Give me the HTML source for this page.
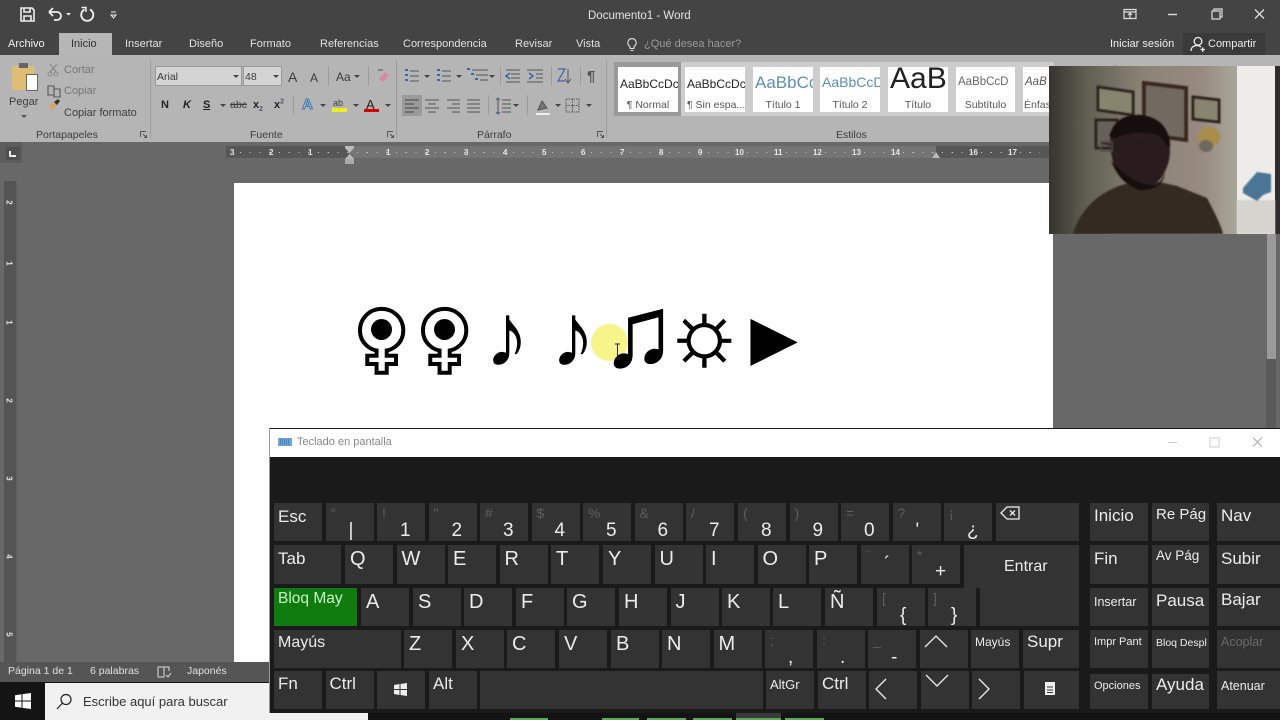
<!DOCTYPE html>
<html lang="es"><head><meta charset="utf-8"><title>Documento1 - Word</title>
<style>
html,body{margin:0;padding:0;width:1280px;height:720px;overflow:hidden;background:#686868}
body{position:relative;font-family:"Liberation Sans","Noto Sans CJK JP",sans-serif}
div,span,svg{position:absolute}
.t{white-space:nowrap;line-height:1}
.tab{top:38px;font-size:11px;color:#e2e2e2;white-space:nowrap;line-height:13px}
.r{font-size:10.5px;color:#3c3c3c;white-space:nowrap;line-height:12px}
.g{color:#777}
.b{font-size:11px;font-weight:bold;color:#222;white-space:nowrap;line-height:12px}
.sty{top:67px;width:60px;height:45px;background:#fff;overflow:hidden}
.sty i{position:absolute;left:2px;top:9px;font-style:normal;font-size:11.5px;color:#222;white-space:nowrap}
.sty b{position:absolute;left:0;right:0;top:32px;font-weight:normal;font-size:10.5px;color:#555;text-align:center;white-space:nowrap}
.sep{width:1px;background:#9c9c9c}
.rn{top:148px;font-size:8px;color:#e6e6e6;line-height:9px;font-weight:bold}
.k{background:#333;color:#ececec;width:48px;height:38px;font-size:17px;line-height:20px;overflow:visible;white-space:nowrap}
.k u{position:absolute;left:4px;top:4px;text-decoration:none}
.k b{position:absolute;left:5px;top:4px;font-weight:normal;font-size:20px}
.k s{position:absolute;left:5px;top:0;text-decoration:none;font-size:14px;color:#5e5e5e}
.k em{position:absolute;left:23px;top:18px;font-style:normal;font-size:19px;line-height:20px}
.r1{top:503px}.r2{top:545px;height:39px}.r3{top:588px}.r4{top:630px}.r5{top:671px}
.sm u{font-size:12px;top:2px}
.fem{font-family:"DejaVu Sans",sans-serif;line-height:1;white-space:nowrap;font-size:70px;color:#fff;-webkit-text-stroke:8px #000;paint-order:stroke fill}
.sym{font-family:"Liberation Sans","DejaVu Sans",sans-serif;color:#000;line-height:1;white-space:nowrap;font-size:90px}
.green{top:718px;height:2px;background:#5fa860}
.dd{border:3px solid transparent;border-top:3px solid #444}
</style></head><body>

<!-- title bar and tabs -->
<div style="left:0;top:0;width:1280px;height:55px;background:#444"></div>
<svg style="left:0;top:0" width="130" height="30" fill="none" stroke="#eee" stroke-width="1.6">
<path d="M21 8h11l2 2v11H21z"/><path d="M24 8v4h6V8M24 21v-5h7v5"/>
<path d="M49 12h8a4 4 0 0 1 0 8h-3M49 12l4-4M49 12l4 4" stroke-width="1.8"/>
<path d="M66 13h5l-2.500 2.500z" fill="#eee" stroke="none"/>
<path d="M84.500 9.500a6 6 0 1 0 5.500 0" stroke-width="1.900"/><path d="M81.500 7.500h4.500v4.500" stroke-width="1.500"/>
<path d="M111 12h5M111 15h5l-2.500 3z" stroke-width="1"/>
</svg>
<div class="t" style="left:588px;top:11px;font-size:11.500px;color:#e4e4e4">Documento1 - Word</div>
<svg style="left:1115px;top:0" width="165" height="30" fill="none" stroke="#ddd" stroke-width="1.200">
<path d="M9 9.500h12v9H9zM9 12h12M15 18v-5M13 15l2-2 2 2"/>
<path d="M53 14.500h9" stroke-width="1.400"/>
<path d="M97 11h8v8h-8zM99 11V9h8v8h-2"/>
<path d="M140 9.500l9 9M149 9.500l-9 9" stroke-width="1.300"/>
</svg>
<div style="left:59px;top:33px;width:53px;height:22px;background:#b6b6b6"></div>
<div class="tab" style="left:8px;color:#f0f0f0">Archivo</div>
<div class="tab" style="left:71px;color:#333">Inicio</div>
<div class="tab" style="left:125px">Insertar</div>
<div class="tab" style="left:189px">Diseño</div>
<div class="tab" style="left:250px">Formato</div>
<div class="tab" style="left:320px">Referencias</div>
<div class="tab" style="left:403px">Correspondencia</div>
<div class="tab" style="left:515px">Revisar</div>
<div class="tab" style="left:576px">Vista</div>
<svg style="left:625px;top:36px" width="15" height="16" fill="none" stroke="#ddd" stroke-width="1.100"><path d="M5 10.500a4.200 4.200 0 1 1 4 0v2H5zM5.500 14.500h3"/></svg>
<div class="tab" style="left:644px;color:#9c9c9c">¿Qué desea hacer?</div>
<div class="tab" style="left:1110px;color:#eee">Iniciar sesión</div>
<div style="left:1183px;top:33px;width:82px;height:22px;background:#3a3a3a"></div>
<svg style="left:1189px;top:35px" width="17" height="18" fill="none" stroke="#eee" stroke-width="1.300"><path d="M9 2.500a3.800 3.800 0 1 0 .01 0M2 16c0-3.500 2.500-5.500 6-5.500 2 0 3 .5 4 1.500M11.500 14.500h4.500M13.700 12.500v4.500"/></svg>
<div class="tab" style="left:1208px;color:#eee">Compartir</div>

<!-- ribbon -->
<div style="left:0;top:55px;width:1280px;height:87px;background:#b5b5b5"></div>
<div class="sep" style="left:150px;top:60px;height:78px"></div>
<div class="sep" style="left:396px;top:60px;height:78px"></div>
<div class="sep" style="left:606px;top:60px;height:78px"></div>
<!-- clipboard -->
<div style="left:12px;top:66px;width:22px;height:24px;background:#e0bd74"></div>
<div style="left:19px;top:63px;width:9px;height:5px;background:#666"></div>
<div style="left:26px;top:74px;width:12px;height:17px;background:#fff;border:1px solid #666;box-sizing:border-box"></div>
<div class="r" style="left:9px;top:96px;font-size:11px">Pegar</div>
<div class="dd" style="left:21px;top:115px;border-top-color:#555"></div>
<svg style="left:46px;top:62px" width="16" height="60" fill="none" stroke="#888" stroke-width="1.100"><circle cx="4" cy="12" r="2"/><circle cx="10" cy="12" r="2"/><path d="M4 10l7-8M10 10L4 2"/><path d="M2 24h6v9H2zM8 27h6v8H8z" stroke="#555"/><path d="M3 44l5-4 3 3-5 5z" fill="#d9a860" stroke="none"/><path d="M8 40l4-3 2 2-3 4z" fill="#333" stroke="none"/></svg>
<div class="r g" style="left:64px;top:64px;font-size:11px">Cortar</div>
<div class="r g" style="left:64px;top:85px;font-size:11px">Copiar</div>
<div class="r" style="left:64px;top:107px;font-size:11px">Copiar formato</div>
<div class="r" style="left:36px;top:129px">Portapapeles</div>
<svg style="left:139px;top:130px" width="9" height="9" fill="none" stroke="#555"><path d="M1.500 7V1.500H7M4 4l3.500 3.500M7.500 5v2.500H5"/></svg>
<!-- font -->
<div style="left:155px;top:66px;width:87px;height:20px;background:#d4d4d4;border:1px solid #999;box-sizing:border-box"></div>
<div style="left:243px;top:66px;width:39px;height:20px;background:#d4d4d4;border:1px solid #999;box-sizing:border-box"></div>
<div class="r" style="left:157px;top:71px">Arial</div>
<div class="r" style="left:245px;top:71px">48</div>
<div class="dd" style="left:233px;top:75px"></div>
<div class="dd" style="left:273px;top:75px"></div>
<div class="r" style="left:288px;top:70px;font-size:14px;line-height:15px">A</div>
<div class="r" style="left:310px;top:72px;font-size:12px;line-height:13px">A</div>
<div class="sep" style="left:328px;top:66px;height:20px"></div>
<div class="r" style="left:336px;top:70px;font-size:12px;line-height:14px">Aa</div>
<div class="dd" style="left:354px;top:75px"></div>
<div class="sep" style="left:368px;top:66px;height:20px"></div>
<svg style="left:375px;top:68px" width="16" height="16"><path d="M4 11l6-7 4 3-6 7z" fill="#d98a9a"/><path d="M3 2h5" stroke="#555"/></svg>
<div class="b" style="left:161px;top:99px">N</div>
<div class="b" style="left:183px;top:99px;font-style:italic">K</div>
<div class="b" style="left:203px;top:99px;text-decoration:underline">S</div>
<div class="dd" style="left:220px;top:104px"></div>
<div class="r" style="left:230px;top:99px;text-decoration:line-through">abc</div>
<div class="b" style="left:253px;top:99px">x<sub style="font-size:7px;color:#557">2</sub></div>
<div class="b" style="left:274px;top:99px">x<sup style="font-size:7px;color:#557;line-height:0">2</sup></div>
<div class="sep" style="left:293px;top:95px;height:20px"></div>
<div class="b" style="left:302px;top:97px;font-size:15px;line-height:16px;color:#9cc0e0;-webkit-text-stroke:1px #4a78a8">A</div>
<div class="dd" style="left:320px;top:104px"></div>
<div class="r" style="left:333px;top:97px;font-size:9px">ab</div>
<div style="left:332px;top:108px;width:15px;height:4px;background:#eded20"></div>
<div class="dd" style="left:353px;top:104px"></div>
<div class="b" style="left:366px;top:98px;font-size:13px;line-height:13px;font-weight:normal">A</div>
<div style="left:364px;top:109px;width:15px;height:3px;background:#e00000"></div>
<div class="dd" style="left:385px;top:104px"></div>
<div class="r" style="left:250px;top:129px">Fuente</div>
<svg style="left:386px;top:130px" width="9" height="9" fill="none" stroke="#555"><path d="M1.500 7V1.500H7M4 4l3.500 3.500M7.500 5v2.500H5"/></svg>
<!-- paragraph -->
<div style="left:402px;top:95px;width:20px;height:21px;background:#9a9a9a"></div>
<svg style="left:400px;top:64px" width="205" height="52" fill="none" stroke="#555">
<path d="M10 7h9M10 12h9M10 17h9M42 7h9M42 12h9M42 17h9M72 6h16M76 11h12M80 16h8M106 6h14M111 10h9M111 14h9M106 18h14M127 6h16M136 10h7M136 14h7M127 18h16"/>
<path d="M5 6h3M5 11h3M5 16h3M37 6h3M37 11h3M37 16h3M67 5h3M71 10h3M75 15h3" stroke="#3468a8" stroke-width="2"/>
<path d="M110 9l-4 3 4 3M129 9l4 3-4 3" stroke="#3468a8" stroke-width="1.500"/>
<path d="M158 5h7l-7 12h7" stroke="#3468a8" stroke-width="1.200"/><path d="M168 5v14M165 15l3 4 3-4"/>
<path d="M5 36h14M5 40h9M5 44h14M5 48h9" stroke="#444"/>
<path d="M25 36h14M28 40h8M25 44h14M28 48h8M47 36h13M52 40h8M47 44h13M52 48h8M67 36h13M67 40h13M67 44h13M67 48h13M102 36h9M102 40h9M102 44h9M102 48h9M98 34v16"/>
<path d="M96 36l2-2 2 2M96 48l2 2 2-2" stroke="#3468a8"/>
<path d="M138 46l4-9 5 7z" fill="#777"/><path d="M136 50h14" stroke="#eee" stroke-width="2"/>
<path d="M166 35h13v13h-13zM172.500 35v13M166 41.500h13" stroke-dasharray="1.500 1"/>
</svg>
<div class="dd" style="left:424px;top:75px"></div>
<div class="dd" style="left:456px;top:75px"></div>
<div class="dd" style="left:489px;top:75px"></div>
<div class="dd" style="left:513px;top:104px"></div>
<div class="dd" style="left:555px;top:104px"></div>
<div class="dd" style="left:586px;top:104px"></div>
<div class="sep" style="left:500px;top:66px;height:20px"></div>
<div class="sep" style="left:551px;top:66px;height:20px"></div>
<div class="sep" style="left:580px;top:66px;height:20px"></div>
<div class="sep" style="left:488px;top:95px;height:20px"></div>
<div class="sep" style="left:527px;top:95px;height:20px"></div>
<div class="r" style="left:587px;top:69px;font-size:15px;line-height:16px;font-weight:bold;color:#555">¶</div>
<div class="r" style="left:477px;top:129px">Párrafo</div>
<svg style="left:596px;top:130px" width="9" height="9" fill="none" stroke="#555"><path d="M1.500 7V1.500H7M4 4l3.500 3.500M7.500 5v2.500H5"/></svg>
<!-- styles -->
<div style="left:614px;top:62px;width:440px;height:54px;background:#cdcdcd"></div>
<div style="left:614px;top:62px;width:67px;height:54px;background:#9a9a9a"></div>
<div class="sty" style="left:618px"><i style="top:10px;font-size:12px">AaBbCcDc</i><b>¶ Normal</b></div>
<div class="sty" style="left:685px"><i style="top:10px;font-size:12px">AaBbCcDc</i><b style="text-align:left;left:2px">¶ Sin espa...</b></div>
<div class="sty" style="left:753px"><i style="font-size:17px;top:6px;color:#5b8fb8">AaBbCc</i><b>Título 1</b></div>
<div class="sty" style="left:820px"><i style="font-size:14px;top:7px;color:#5b8fb8">AaBbCcD</i><b>Título 2</b></div>
<div class="sty" style="left:888px"><i style="font-size:30px;top:-5px;color:#222">AaB</i><b>Título</b></div>
<div class="sty" style="left:956px;width:59px"><i style="color:#666">AaBbCcD</i><b>Subtítulo</b></div>
<div class="sty" style="left:1023px;width:27px"><i style="font-style:italic;color:#555;left:2px">AaB</i><b style="text-align:left;left:1px">Énfasis</b></div>
<div class="r" style="left:836px;top:129px">Estilos</div>
<div style="left:1115px;top:64px;width:1px;height:50px;background:#9c9c9c"></div>

<!-- document area -->
<div style="left:0;top:142px;width:1280px;height:540px;background:#686868"></div>
<div style="left:0;top:142px;width:22px;height:21px;background:#5c5c5c"></div>
<div style="left:6px;top:147px;width:14px;height:13px;background:#4f4f4f"></div>
<svg style="left:9px;top:150px" width="8" height="8"><path d="M1 1v5h6" fill="none" stroke="#eee" stroke-width="2"/></svg>
<div style="left:226px;top:146px;width:123px;height:12px;background:#575757"></div>
<div style="left:349px;top:146px;width:587px;height:12px;background:#757575"></div>
<div style="left:936px;top:146px;width:114px;height:12px;background:#575757"></div>
<div style="left:240px;top:152px;width:800px;height:1px;background:repeating-linear-gradient(90deg,#c4c4c4 0 1px,transparent 1px 9.750px)"></div>
<span class="rn" style="left:230px">3</span><span class="rn" style="left:269px">2</span><span class="rn" style="left:308px">1</span>
<span class="rn" style="left:386px">1</span><span class="rn" style="left:425px">2</span><span class="rn" style="left:464px">3</span><span class="rn" style="left:503px">4</span><span class="rn" style="left:542px">5</span><span class="rn" style="left:581px">6</span><span class="rn" style="left:620px">7</span><span class="rn" style="left:659px">8</span><span class="rn" style="left:698px">9</span><span class="rn" style="left:735px">10</span><span class="rn" style="left:774px">11</span><span class="rn" style="left:813px">12</span><span class="rn" style="left:852px">13</span><span class="rn" style="left:891px">14</span><span class="rn" style="left:969px">16</span><span class="rn" style="left:1008px">17</span>
<svg style="left:343px;top:145px" width="13" height="20"><path d="M2 1h9v2L6.500 8 2 3zM2 14l4.500-5 4.500 5z" fill="#bbb"/><rect x="2" y="14" width="9" height="5" fill="#aaa"/></svg>
<svg style="left:931px;top:150px" width="10" height="9"><path d="M1 8l4-6 4 6z" fill="#bbb"/></svg>
<div style="left:4px;top:181px;width:12px;height:481px;background:#545454"></div>
<div style="left:16px;top:181px;width:1px;height:481px;background:#5f5f5f"></div>
<div class="rn" style="left:7px;top:198px;transform:rotate(90deg)">2</div>
<div class="rn" style="left:7px;top:259px;transform:rotate(90deg)">1</div>
<div class="rn" style="left:7px;top:318px;transform:rotate(90deg)">1</div>
<div class="rn" style="left:7px;top:396px;transform:rotate(90deg)">2</div>
<div class="rn" style="left:7px;top:474px;transform:rotate(90deg)">3</div>
<div class="rn" style="left:7px;top:552px;transform:rotate(90deg)">4</div>
<div class="rn" style="left:7px;top:630px;transform:rotate(90deg)">5</div>
<div style="left:234px;top:183px;width:819px;height:500px;background:#fff"></div>
<div style="left:1267px;top:234px;width:9px;height:125px;background:#9a9a9a"></div>
<div style="left:1266px;top:359px;width:10px;height:70px;background:#5a5a5a"></div>

<!-- symbols -->
<div style="left:591px;top:324px;width:37px;height:37px;border-radius:50%;background:#f7f58a"></div>
<div class="fem" style="left:356px;top:303px">♀</div>
<div class="fem" style="left:419px;top:303px">♀</div>
<div style="left:364px;top:312px;width:35px;height:35px;border-radius:50%;background:#fff"></div>
<div style="left:427px;top:312px;width:35px;height:35px;border-radius:50%;background:#fff"></div>
<div style="left:371px;top:319px;width:21px;height:21px;border-radius:50%;background:#000"></div>
<div style="left:434px;top:319px;width:21px;height:21px;border-radius:50%;background:#000"></div>
<div class="sym" style="left:484.500px;top:291px">♪</div>
<div class="sym" style="left:550.500px;top:291px">♪</div>
<div class="sym" style="left:601px;top:282px;font-size:100px;-webkit-text-stroke:1px #000">♫</div>
<div class="sym" style="left:664px;top:287px;font-size:88px;-webkit-text-stroke:1.500px #000">☼</div>
<div class="sym" style="left:735px;top:298px;font-size:79px">►</div>
<svg style="left:612px;top:343px" width="12" height="18" fill="none" stroke="#222" stroke-width="1"><path d="M3 1h5M3 16h5M5.500 1v15"/></svg>

<!-- webcam -->
<svg style="left:1049px;top:66px" width="231" height="168" viewBox="0 0 231 168">
<defs>
<linearGradient id="w" x1="0" x2="1" y1="0" y2="0"><stop offset="0" stop-color="#35352e"/><stop offset=".2" stop-color="#5f5f52"/><stop offset=".5" stop-color="#8a8476"/><stop offset=".8" stop-color="#97897f"/><stop offset="1" stop-color="#a8a69a"/></linearGradient>
<filter id="bl"><feGaussianBlur stdDeviation=".8"/></filter>
</defs>
<rect width="188" height="168" fill="url(#w)"/>
<rect x="188" width="38" height="168" fill="#eeece8"/>
<rect x="226" width="5" height="168" fill="#2e2e2e"/>
<g filter="url(#bl)">
<rect x="188" y="134" width="38" height="34" fill="#d6d4ce"/>
<path d="M194 122l14-16 14 2v18l-8 3-6 6-14-8z" fill="#4b7596"/>
<path d="M49 21l35 5v23l-35-5z" fill="#87846f" stroke="#2a231c" stroke-width="3"/>
<path d="M95 17l42 5v52l-42-6z" fill="#6f6a60" stroke="#3a281c" stroke-width="4"/>
<path d="M144 31l26 3v22l-26-3z" fill="#87846f" stroke="#2a231c" stroke-width="3"/>
<path d="M47 54h21v28H47z" fill="#66625a" stroke="#2a231c" stroke-width="3"/>
<ellipse cx="160" cy="71" rx="11" ry="10" fill="#a88c48"/>
<ellipse cx="157" cy="80" rx="7" ry="6" fill="#6e675c"/>
<path d="M24 168c6-22 24-42 52-50l34-2 18 4 30 12c6 12 14 26 16 36z" fill="#352a24"/>
<path d="M61 72c0-16 14-24 30-23 18 0 30 16 30 34 0 10-2 16-4 20-4 10-10 18-26 18-14 0-22-10-26-22-3-10-4-18-4-27z" fill="#2a1e1b"/>
<path d="M60 70c4-14 18-22 32-21 18 1 30 14 29 32-6-2-8-10-14-12-14-4-28-2-42 4z" fill="#160e0c"/>
<path d="M62 95c10 10 24 24 44 24 6-2 8-8 10-12-2 14-14 18-26 17-12-4-22-14-28-29z" fill="#160e0c"/>
<path d="M52 77l18 3 32-7" fill="none" stroke="#201b1b" stroke-width="2"/>
<rect x="52" y="76" width="11" height="9" fill="none" stroke="#4f4a44" stroke-width="1.500"/>
</g>
</svg>

<!-- status bar -->
<div style="left:0;top:662px;width:270px;height:20px;background:#555"></div>
<div class="t" style="left:8px;top:666px;font-size:10.500px;color:#e0e0e0">Página 1 de 1</div>
<div class="t" style="left:90px;top:666px;font-size:10.500px;color:#e0e0e0">6 palabras</div>
<svg style="left:157px;top:665px" width="15" height="14" fill="none" stroke="#ddd"><path d="M1 2h6v10H1zM7 2l5 0v4M9 10l2 2 3-4"/></svg>
<div class="t" style="left:187px;top:666px;font-size:10.500px;color:#e0e0e0">Japonés</div>

<!-- taskbar -->
<div style="left:0;top:682px;width:1280px;height:38px;background:#141414"></div>
<svg style="left:15px;top:693px" width="16" height="16" fill="#fff"><path d="M0 2.300l6.500-1v6.200H0zM7.500 1.100L16 0v7.500H7.500zM0 8.500h6.500v6.200l-6.500-1zM7.500 8.500H16V16l-8.500-1.100z"/></svg>
<div style="left:45px;top:683px;width:323px;height:37px;background:#f1f1f1"></div>
<svg style="left:55px;top:692px" width="20" height="20" fill="none" stroke="#222" stroke-width="1.200"><circle cx="11" cy="7.500" r="5"/><path d="M7.500 11L2 17"/></svg>
<div class="t" style="left:83px;top:695px;font-size:13px;color:#333">Escribe aquí para buscar</div>
<div class="green" style="left:510px;width:38px"></div>
<div class="green" style="left:602px;width:37px"></div>
<div class="green" style="left:647px;width:39px"></div>
<div class="green" style="left:693px;width:39px"></div>
<div style="left:736px;top:712px;width:45px;height:6px;background:#3a3a3a"></div>
<div class="green" style="left:736px;width:45px"></div>
<div class="green" style="left:785px;width:39px"></div>

<!-- on-screen keyboard -->
<div style="left:269px;top:428px;width:1011px;height:285px;background:#1a1a1a;border-left:1px solid #999;box-sizing:border-box"></div>
<div style="left:270px;top:429px;width:1010px;height:28px;background:#fff"></div>
<svg style="left:278px;top:438px" width="14" height="8"><rect width="14" height="8" fill="#6ea5d8"/><path d="M2 2h10M2 4h10M2 6h10" stroke="#2a5f9a" stroke-dasharray="1 1"/></svg>
<div class="t" style="left:297px;top:437px;font-size:11px;color:#888">Teclado en pantalla</div>
<svg style="left:1160px;top:433px" width="110" height="18" fill="none" stroke="#ccc"><path d="M8 9.500h9M50 5h9v9h-9z"/><path d="M93 4.500l9 9M102 4.500l-9 9" stroke="#aaa"/></svg>

<div class="k r1" style="left:274px"><u>Esc</u></div>
<div class="k r1" style="left:325.500px"><s>°</s><em>|</em></div>
<div class="k r1" style="left:377px"><s>!</s><em>1</em></div>
<div class="k r1" style="left:428.500px"><s>"</s><em>2</em></div>
<div class="k r1" style="left:480px"><s>#</s><em>3</em></div>
<div class="k r1" style="left:531.500px"><s>$</s><em>4</em></div>
<div class="k r1" style="left:583px"><s>%</s><em>5</em></div>
<div class="k r1" style="left:634.500px"><s>&amp;</s><em>6</em></div>
<div class="k r1" style="left:686px"><s>/</s><em>7</em></div>
<div class="k r1" style="left:738px"><s>(</s><em>8</em></div>
<div class="k r1" style="left:789.500px"><s>)</s><em>9</em></div>
<div class="k r1" style="left:841px"><s>=</s><em>0</em></div>
<div class="k r1" style="left:892.500px"><s>?</s><em>'</em></div>
<div class="k r1" style="left:944px"><s>¡</s><em>¿</em></div>
<div class="k r1" style="left:996px;width:83px"><svg style="left:4px;top:2px" width="21" height="17" fill="none" stroke="#eee" stroke-width="1.300"><path d="M7 2h12v12H7L1 8zM10 5.500l5 5M15 5.500l-5 5"/></svg></div>

<div class="k r2" style="left:274px;width:67px"><u>Tab</u></div>
<div class="k r2" style="left:345px"><b>Q</b></div>
<div class="k r2" style="left:396.500px"><b>W</b></div>
<div class="k r2" style="left:448px"><b>E</b></div>
<div class="k r2" style="left:499.500px"><b>R</b></div>
<div class="k r2" style="left:551px"><b>T</b></div>
<div class="k r2" style="left:603px"><b>Y</b></div>
<div class="k r2" style="left:654.500px"><b>U</b></div>
<div class="k r2" style="left:706px"><b>I</b></div>
<div class="k r2" style="left:757.500px"><b>O</b></div>
<div class="k r2" style="left:809px"><b>P</b></div>
<div class="k r2" style="left:861px"><s>¨</s><em style="top:10px">´</em></div>
<div class="k r2" style="left:912px"><s>*</s><em style="top:17px">+</em></div>
<div class="k" style="left:964px;top:545px;width:115px;height:43px"><u style="left:40px;top:12px;font-size:16px">Entrar</u></div>
<div class="k" style="left:980px;top:585px;width:99px;height:41px"></div>

<div class="k r3" style="left:274px;width:83px;background:#107c10;color:#c8f0c8"><u style="font-size:15.500px;top:1px">Bloq May</u></div>
<div class="k r3" style="left:361px"><b>A</b></div>
<div class="k r3" style="left:413px"><b>S</b></div>
<div class="k r3" style="left:464px"><b>D</b></div>
<div class="k r3" style="left:516px"><b>F</b></div>
<div class="k r3" style="left:567px"><b>G</b></div>
<div class="k r3" style="left:619px"><b>H</b></div>
<div class="k r3" style="left:670.500px"><b>J</b></div>
<div class="k r3" style="left:722px"><b>K</b></div>
<div class="k r3" style="left:773px"><b>L</b></div>
<div class="k r3" style="left:825px"><b>Ñ</b></div>
<div class="k r3" style="left:877px"><s>[</s><em>{</em></div>
<div class="k r3" style="left:928px"><s>]</s><em>}</em></div>

<div class="k r4" style="left:274px;width:127px"><u style="font-size:16px;top:3px">Mayús</u></div>
<div class="k r4" style="left:404px"><b>Z</b></div>
<div class="k r4" style="left:456px"><b>X</b></div>
<div class="k r4" style="left:507px"><b>C</b></div>
<div class="k r4" style="left:559px"><b>V</b></div>
<div class="k r4" style="left:611px"><b>B</b></div>
<div class="k r4" style="left:662px"><b>N</b></div>
<div class="k r4" style="left:713.500px"><b>M</b></div>
<div class="k r4" style="left:765px"><s>;</s><em>,</em></div>
<div class="k r4" style="left:817px"><s>:</s><em>.</em></div>
<div class="k r4" style="left:868px"><s>_</s><em>-</em></div>
<div class="k r4" style="left:920px"><svg style="left:4px;top:4px" width="24" height="14" fill="none" stroke="#eee" stroke-width="1.300"><path d="M1 13L12 2l11 11"/></svg></div>
<div class="k r4 sm" style="left:971px"><u>Mayús</u></div>
<div class="k r4" style="left:1023px;width:56px"><u style="top:2px">Supr</u></div>

<div class="k r5" style="left:274px"><u style="top:3px">Fn</u></div>
<div class="k r5" style="left:325.500px"><u style="top:3px">Ctrl</u></div>
<div class="k r5" style="left:377px"><svg style="left:17px;top:12px" width="13" height="13" fill="#eee"><path d="M0 2l5.500-1v5H0zM6.500 1L13 0v6H6.500zM0 7h5.500v5L0 11zM6.500 7H13v6l-6.500-1z"/></svg></div>
<div class="k r5" style="left:429px"><u style="top:3px">Alt</u></div>
<div class="k r5" style="left:480px;width:283px"></div>
<div class="k r5" style="left:766px"><u style="font-size:13px;top:4px">AltGr</u></div>
<div class="k r5" style="left:818px"><u style="top:3px">Ctrl</u></div>
<div class="k r5" style="left:869px"><svg style="left:5px;top:6px" width="14" height="24" fill="none" stroke="#eee" stroke-width="1.300"><path d="M12 2L2 12l10 10"/></svg></div>
<div class="k r5" style="left:921px"><svg style="left:4px;top:3px" width="24" height="14" fill="none" stroke="#eee" stroke-width="1.300"><path d="M1 1l11 11L23 1"/></svg></div>
<div class="k r5" style="left:972px"><svg style="left:5px;top:6px" width="14" height="24" fill="none" stroke="#eee" stroke-width="1.300"><path d="M2 2l10 10L2 22"/></svg></div>
<div class="k r5" style="left:1024px;width:55px"><svg style="left:21px;top:11px" width="11" height="14"><rect width="10" height="13" fill="#eee"/><path d="M2 5h6M2 8h6M2 10.500h6" stroke="#333"/></svg></div>

<div class="k r1" style="left:1090px;width:58px"><u style="top:3px">Inicio</u></div>
<div class="k r1" style="left:1152px;width:57px"><u style="font-size:15px;top:2px">Re Pág</u></div>
<div class="k r1" style="left:1217px;width:63px"><u style="top:3px">Nav</u></div>
<div class="k r2" style="left:1090px;width:58px"><u>Fin</u></div>
<div class="k r2" style="left:1152px;width:57px"><u style="font-size:13.500px;top:1px">Av Pág</u></div>
<div class="k r2" style="left:1217px;width:63px"><u>Subir</u></div>
<div class="k r3" style="left:1090px;width:58px"><u style="font-size:12.500px;top:4px">Insertar</u></div>
<div class="k r3" style="left:1152px;width:57px"><u style="top:3px">Pausa</u></div>
<div class="k r3" style="left:1217px;width:63px"><u style="top:2px">Bajar</u></div>
<div class="k r4" style="left:1090px;width:58px"><u style="font-size:11px;top:2px">Impr Pant</u></div>
<div class="k r4" style="left:1152px;width:57px"><u style="font-size:10.500px;top:3px">Bloq Despl</u></div>
<div class="k r4" style="left:1217px;width:63px;color:#6a6a6a"><u style="font-size:12.500px;top:2px">Acoplar</u></div>
<div class="k" style="left:1090px;top:674px;width:58px;height:35px"><u style="font-size:11px;top:2px">Opciones</u></div>
<div class="k" style="left:1152px;top:674px;width:57px;height:35px"><u style="top:1px">Ayuda</u></div>
<div class="k r5" style="left:1217px;width:63px"><u style="font-size:12.500px;top:5px">Atenuar</u></div>

</body></html>
